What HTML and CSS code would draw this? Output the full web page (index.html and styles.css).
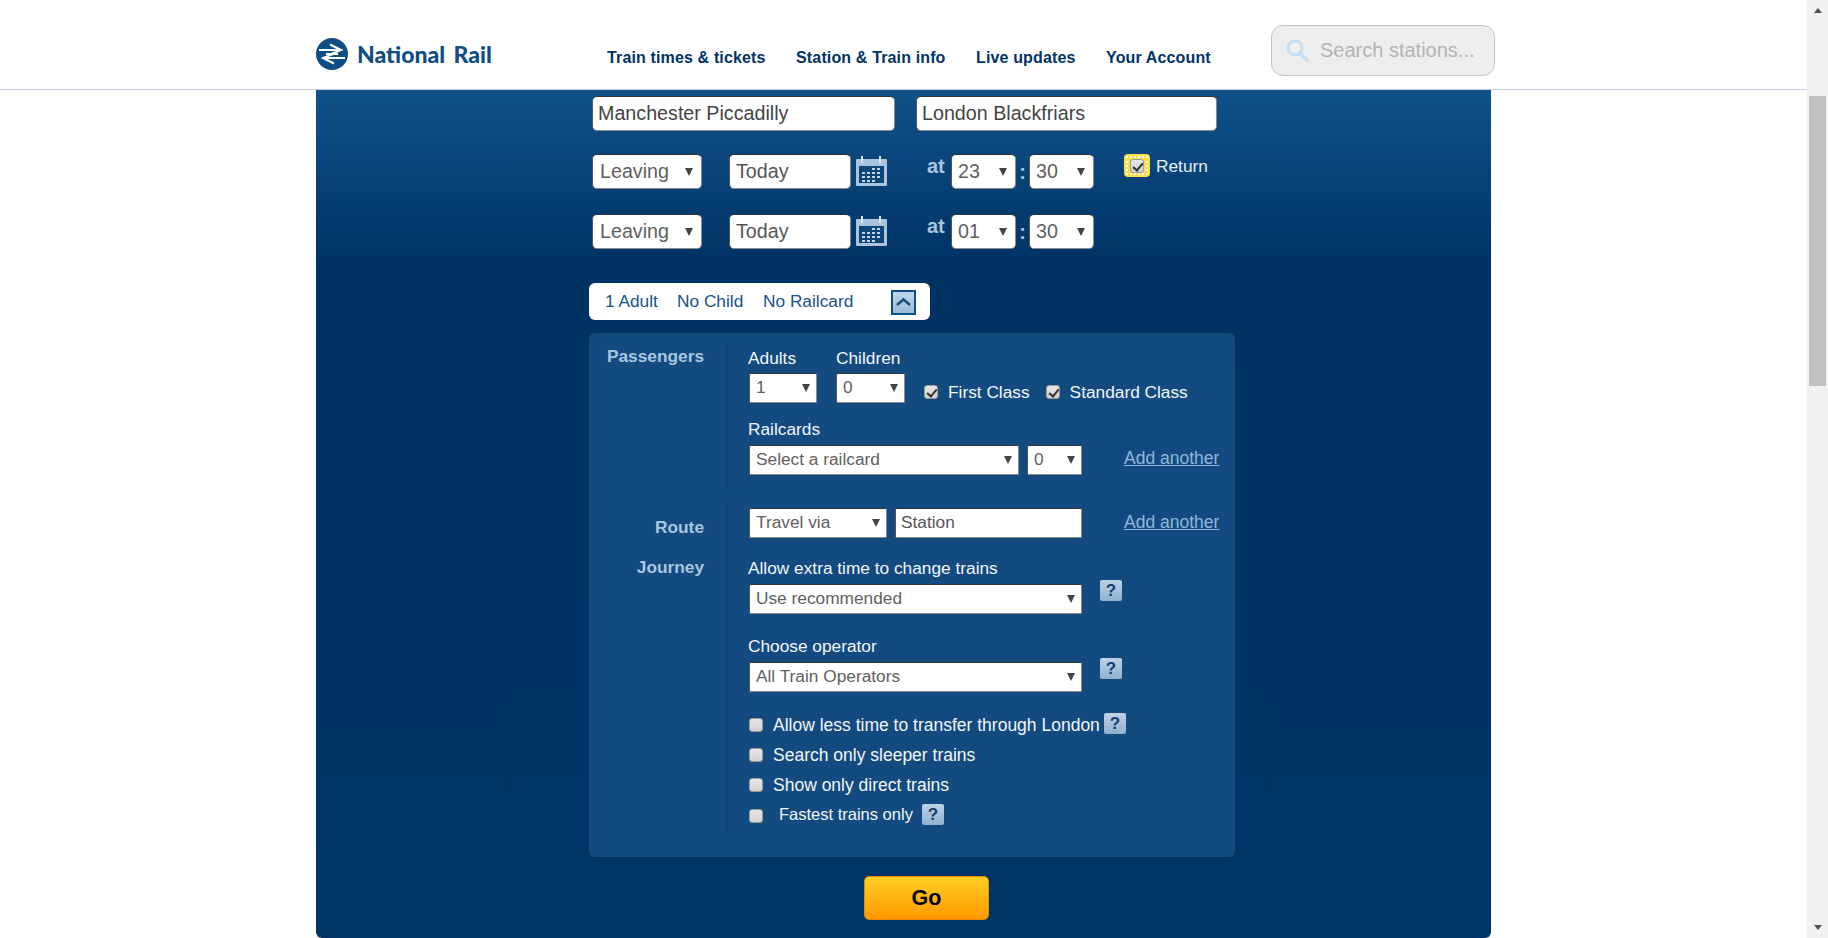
FILE: index.html
```html
<!DOCTYPE html>
<html lang="en">
<head>
<meta charset="utf-8">
<title>National Rail</title>
<link rel="stylesheet" href="styles.css">
</head>
<body>
<div class="window">
  <div class="page">
    <header class="site-header">
      <div class="header-inner">
        <a class="logo">
          <svg class="logo-mark" viewBox="0 0 32 32"><circle cx="16" cy="16" r="16" fill="#0f4e85"/><path d="M3 12H25M10 16H22M7 20H29M14 6.5 25 12 15 16M17 16 7 20 18 25.500" fill="none" stroke="#fff" stroke-width="2"/></svg>
          <span class="logo-text">National Rail</span>
        </a>
        <nav class="main-nav">
          <a>Train times &amp; tickets</a>
          <a>Station &amp; Train info</a>
          <a>Live updates</a>
          <a>Your Account</a>
        </nav>
        <div class="search">
          <svg class="search-icon" viewBox="0 0 23 23"><circle cx="9" cy="9" r="7" fill="none" stroke="#c6def1" stroke-width="3"/><path d="M14 14 21.500 21.500" stroke="#c6def1" stroke-width="3.500" stroke-linecap="round"/></svg>
          <span class="search-text">Search stations...</span>
        </div>
      </div>
    </header>
    <main class="panel">
      <div class="stations">
        <input class="field wide" value="Manchester Piccadilly">
        <input class="field wide narrow" value="London Blackfriars">
      </div>
      <div class="when first">
        <span class="pick leaving"><select class="field"><option>Leaving</option></select></span>
        <input class="field date" value="Today">
        <svg class="cal" viewBox="0 0 31 31"><use href="#calendar"/></svg>
        <b class="at">at</b>
        <span class="pick time"><select class="field"><option>23</option></select></span>
        <b class="colon">:</b>
        <span class="pick time"><select class="field"><option>30</option></select></span>
        <span class="return-box"><input type="checkbox" class="tick" checked></span>
        <span class="return-label">Return</span>
      </div>
      <div class="when second">
        <span class="pick leaving"><select class="field"><option>Leaving</option></select></span>
        <input class="field date" value="Today">
        <svg class="cal" viewBox="0 0 31 31">
          <g id="calendar">
            <rect x="0" y="4" width="31" height="27" rx="1" fill="#a9c4dc"/>
            <rect x="3" y="11" width="25" height="17" fill="#0e4478"/>
            <path d="M6 1V8M24 1V8" stroke="#dbe6f0" stroke-width="2"/>
            <path d="M6 17h3v2H6zM6 21h3v2H6zM6 25h3v2H6zM11 17h3v2h-3zM11 21h3v2h-3zM11 25h3v2h-3zM16 13h3v2h-3zM16 17h3v2h-3zM16 21h3v2h-3zM16 25h3v2h-3zM21 13h3v2h-3zM21 17h3v2h-3zM21 21h3v2h-3z" fill="#c4d6e6"/>
          </g>
        </svg>
        <b class="at">at</b>
        <span class="pick time"><select class="field"><option>01</option></select></span>
        <b class="colon">:</b>
        <span class="pick time"><select class="field"><option>30</option></select></span>
      </div>
      <div class="summary">
        <span class="sum-a">1 Adult</span>
        <span class="sum-b">No Child</span>
        <span class="sum-c">No Railcard</span>
        <span class="toggle"><svg viewBox="0 0 21 21"><path d="M4 13 10.500 7.500 17 13" fill="none" stroke="#1d4d7d" stroke-width="2.500"/></svg></span>
      </div>
      <section class="advanced">
        <div class="group passengers">
          <div class="side"><h3 class="side-passengers">Passengers</h3></div>
          <div class="body">
            <div class="row-top">
              <div class="col-adults">
                <label class="cap">Adults</label>
                <span class="pick small s-adults"><select class="field"><option>1</option></select></span>
              </div>
              <div class="col-children">
                <label class="cap">Children</label>
                <span class="pick small s-children"><select class="field"><option>0</option></select></span>
              </div>
              <label class="check c-first"><input type="checkbox" class="tick" checked>First Class</label>
              <label class="check c-standard"><input type="checkbox" class="tick" checked>Standard Class</label>
            </div>
            <label class="cap cap-rail">Railcards</label>
            <div class="row-rail">
              <span class="pick small s-rail"><select class="field"><option>Select a railcard</option></select></span>
              <span class="pick small s-qty"><select class="field"><option>0</option></select></span>
              <a class="add add-rail">Add another</a>
            </div>
          </div>
        </div>
        <div class="group route">
          <div class="side">
            <h3 class="side-route">Route</h3>
            <h3 class="side-journey">Journey</h3>
          </div>
          <div class="body">
            <div class="row-via">
              <span class="pick small s-via"><select class="field"><option>Travel via</option></select></span>
              <input class="field small-input" value="Station">
              <a class="add add-via">Add another</a>
            </div>
            <label class="cap cap-extra">Allow extra time to change trains</label>
            <div class="row-help">
              <span class="pick small s-full"><select class="field"><option>Use recommended</option></select></span>
              <span class="help help-side">?</span>
            </div>
            <label class="cap cap-operator">Choose operator</label>
            <div class="row-help">
              <span class="pick small s-full"><select class="field"><option>All Train Operators</option></select></span>
              <span class="help help-side">?</span>
            </div>
            <label class="opt o1"><input type="checkbox" class="tick">Allow less time to transfer through London<span class="help help-o1">?</span></label>
            <label class="opt"><input type="checkbox" class="tick">Search only sleeper trains</label>
            <label class="opt"><input type="checkbox" class="tick">Show only direct trains</label>
            <label class="opt o4"><input type="checkbox" class="tick">Fastest trains only<span class="help help-o4">?</span></label>
          </div>
        </div>
      </section>
      <button class="go">Go</button>
    </main>
  </div>
  <aside class="scrollbar">
    <span class="arrow-up"></span>
    <div class="track"><span class="thumb"></span></div>
    <span class="arrow-down"></span>
  </aside>
</div>
</body>
</html>
```
FILE: styles.css
```css
* { box-sizing: border-box; }
html, body { margin: 0; height: 100%; overflow: hidden; }
body { font-family: "Liberation Sans", Arial, sans-serif; background: #fff; color: #fff; }
.window { display: flex; height: 938px; }
.page { flex: 1; min-width: 0; }

/* header */
.site-header { height: 90px; border-bottom: 1px solid #c3cfdc; background: #fff; }
.header-inner { width: 1175px; margin: 0 auto; display: flex; }
.logo { display: flex; flex: none; align-items: center; height: 32px; margin-top: 38px; width: 291px; }
.logo-mark { width: 32px; height: 32px; flex: none; }
.logo-text { margin-left: 9px; font-family: Lato, sans-serif; font-weight: 900; font-size: 23px; color: #0f4e85; word-spacing: 3px; white-space: nowrap; }
.main-nav { display: flex; flex: none; gap: 30.5px; margin-top: 48px; font-weight: 700; font-size: 16px; letter-spacing: 0.14px; line-height: 20px; color: #003366; white-space: nowrap; width: 664px; }
.search { flex: none; width: 224px; height: 51px; margin-top: 25px; border: 1px solid #c4c4c4; border-radius: 12px; background: #eee; display: flex; align-items: center; padding-left: 14px; }
.search-icon { width: 23px; height: 23px; flex: none; }
.search-text { margin-left: 11px; font-size: 20px; color: #b4b4b4; white-space: nowrap; }

/* main panel */
.panel { width: 1175px; height: 848px; margin: 0 auto; padding: 6px 0 0 273px; border-radius: 0 0 6px 6px; background: linear-gradient(#10528a 0, #003264 175px, #003366 100%); }
.field { display: block; width: 100%; height: 100%; margin: 0; padding: 0 0 0 6px; font: 19.7px "Liberation Sans", Arial, sans-serif; color: #555; background: #fff; border: 1px solid; border-color: #333 #8a8a8a #8a8a8a #555; border-radius: 5px; outline: 0; appearance: none; }
.stations { display: flex; gap: 21px; padding-left: 3px; }
.wide { width: 303px; height: 35px; padding-left: 5px; color: #444; }
.narrow { width: 301px; }
.when { display: flex; align-items: flex-start; padding-left: 3px; height: 35px; }
.first { margin-top: 23px; }
.second { margin-top: 25px; }
.pick { display: block; position: relative; flex: none; }
.pick .field { padding: 0 0 2px 7px; color: #5f5f5f; }
.pick::after { content: ""; position: absolute; right: 9px; top: 50%; margin-top: -4px; border: 4px solid transparent; border-top: 8px solid #444; border-bottom: 0; }
.leaving { width: 110px; height: 35px; }
.date { width: 122px; height: 35px; margin-left: 27px; flex: none; }
.cal { width: 31px; height: 31px; margin: 1px 0 0 5px; flex: none; }
.at { margin-left: 40px; width: 24px; padding-top: 2px; font-size: 20px; line-height: 21px; color: #a9c6e0; }
.colon { width: 13px; text-align: center; font-size: 20px; line-height: 36px; color: #a9c6e0; }
.time { width: 65px; height: 35px; }
.time .field { padding-left: 6px; }
.return-box { width: 26px; height: 23px; margin-left: 30px; display: flex; align-items: center; justify-content: center; background: #ffdc4a; border-radius: 4px; outline: 2px dotted #fff; outline-offset: -4px; }
.return-label { margin-left: 6px; padding-top: 1px; font-size: 17.3px; line-height: 22px; color: #e6eff7; }
.tick { appearance: none; position: relative; display: block; flex: none; width: 14px; height: 14px; margin: 0; border: 1px solid #9a9a9a; border-radius: 3px; background: linear-gradient(#e6e6e6, #d2d2d2); }
.tick:checked::after { content: ""; position: absolute; left: 4px; top: 1px; width: 4px; height: 8px; border: solid #333; border-width: 0 2.5px 2.5px 0; transform: rotate(40deg); }

/* summary */
.summary { display: flex; align-items: center; width: 341px; height: 37px; margin-top: 34px; padding-bottom: 1px; background: #fff; border-radius: 6px; font-size: 17.3px; color: #1a5288; white-space: nowrap; }
.sum-a { margin-left: 16px; width: 72px; }
.sum-b { width: 86px; }
.sum-c { width: 128px; }
.toggle { flex: none; width: 25px; height: 25px; margin-top: 3px; border: 2px solid #0f4e85; background: linear-gradient(#bfd5e8, #9dbbd6); display: flex; }

/* advanced */
.advanced { width: 646px; height: 524px; margin-top: 13px; padding-top: 11px; background: #134a7f; border-radius: 6px; }
.group { display: flex; }
.passengers { height: 144px; }
.route { height: 330px; margin-top: 14px; }
.side { width: 138px; height: 100%; padding-right: 22px; border-right: 1px solid #0c3d6d; text-align: right; flex: none; }
.side h3 { margin: 0; font-size: 17.3px; line-height: 20px; color: #a9c6e0; font-weight: 700; }
.side-passengers { padding-top: 2px; }
.side-route { padding-top: 15px; }
.side-journey { margin-top: 20px !important; }
.body { flex: 1; padding-left: 21px; min-width: 0; }
.cap { display: block; font-size: 17.3px; line-height: 20px; color: #f2f6fa; white-space: nowrap; }
.small { height: 30px; margin-left: 1px; }
.small .field { padding-left: 6px; font-size: 17.3px; border-radius: 2px; }
.small::after { right: 7px; }
.row-top { display: flex; align-items: flex-start; padding-top: 4px; }
.col-adults { width: 88px; }
.col-children { width: 88px; }
.col-adults .cap, .col-children .cap { margin-bottom: 5px; }
.s-adults { width: 68px; }
.s-children { width: 69px; margin-left: 0; }
.check { display: flex; align-items: center; margin-top: 34px; font-size: 17.3px; line-height: 20px; color: #f2f6fa; white-space: nowrap; }
.check .tick { margin-right: 10px; }
.c-standard { margin-left: 16px; }
.cap-rail { margin-top: 16px; }
.row-rail, .row-via, .row-help { display: flex; align-items: flex-start; }
.row-rail { margin-top: 6px; }
.s-rail { width: 270px; }
.s-qty { width: 55px; margin-left: 8px; }
.add { font-size: 17.5px; line-height: 20px; color: #8fb7dc; text-decoration: underline; white-space: nowrap; }
.add-rail { margin: 3px 0 0 42px; }
.row-via { padding-top: 6px; }
.s-via { width: 138px; }
.small-input { width: 187px; height: 30px; margin-left: 8px; padding-bottom: 2px; padding-left: 5px; font-size: 17.3px; border-radius: 2px; flex: none; }
.add-via { margin: 4px 0 0 42px; }
.cap-extra { margin-top: 20px; }
.row-help { margin-top: 6px; }
.s-full { width: 333px; }
.help { display: inline-flex; align-items: center; justify-content: center; flex: none; width: 22px; height: 21px; border-radius: 2px; background: linear-gradient(#bdd3e6, #8fb0cf); color: #123f6e; font-size: 17px; font-weight: 700; line-height: 1; }
.help-side { margin: -4px 0 0 18px; }
.cap-operator { margin-top: 22px; }
.opt { display: flex; align-items: center; height: 30px; margin-left: 1px; font-size: 17.5px; color: #f2f6fa; white-space: nowrap; }
.opt .tick { margin-right: 10px; }
.o1 { margin-top: 18px; }
.help-o1 { margin-left: 4px; margin-top: -3px; }
.o4 .tick { margin-right: 16px; margin-top: 4px; }
.o4 { height: 28px; font-size: 16.5px; }
.help-o4 { margin-left: 9px; }

/* go */
.go { display: block; width: 125px; height: 44px; margin: 19px 0 0 275px; padding: 0; border: 1px solid #e68a00; border-radius: 5px; background: linear-gradient(#ffcf24, #ff9a00); color: #000; font: 700 21.5px "Liberation Sans", Arial, sans-serif; }

/* scrollbar */
.scrollbar { flex: none; width: 21px; height: 938px; background: #f1f1f1; display: flex; flex-direction: column; align-items: center; }
.arrow-up, .arrow-down { flex: none; width: 0; height: 0; border: 4px solid transparent; }
.arrow-up { margin-top: 8px; border-top: 0; border-bottom: 5px solid #505050; }
.arrow-down { margin-bottom: 8px; border-bottom: 0; border-top: 5px solid #505050; }
.track { flex: 1; width: 100%; padding: 83px 2px 0; }
.thumb { display: block; height: 290px; background: #c1c1c1; }
```
